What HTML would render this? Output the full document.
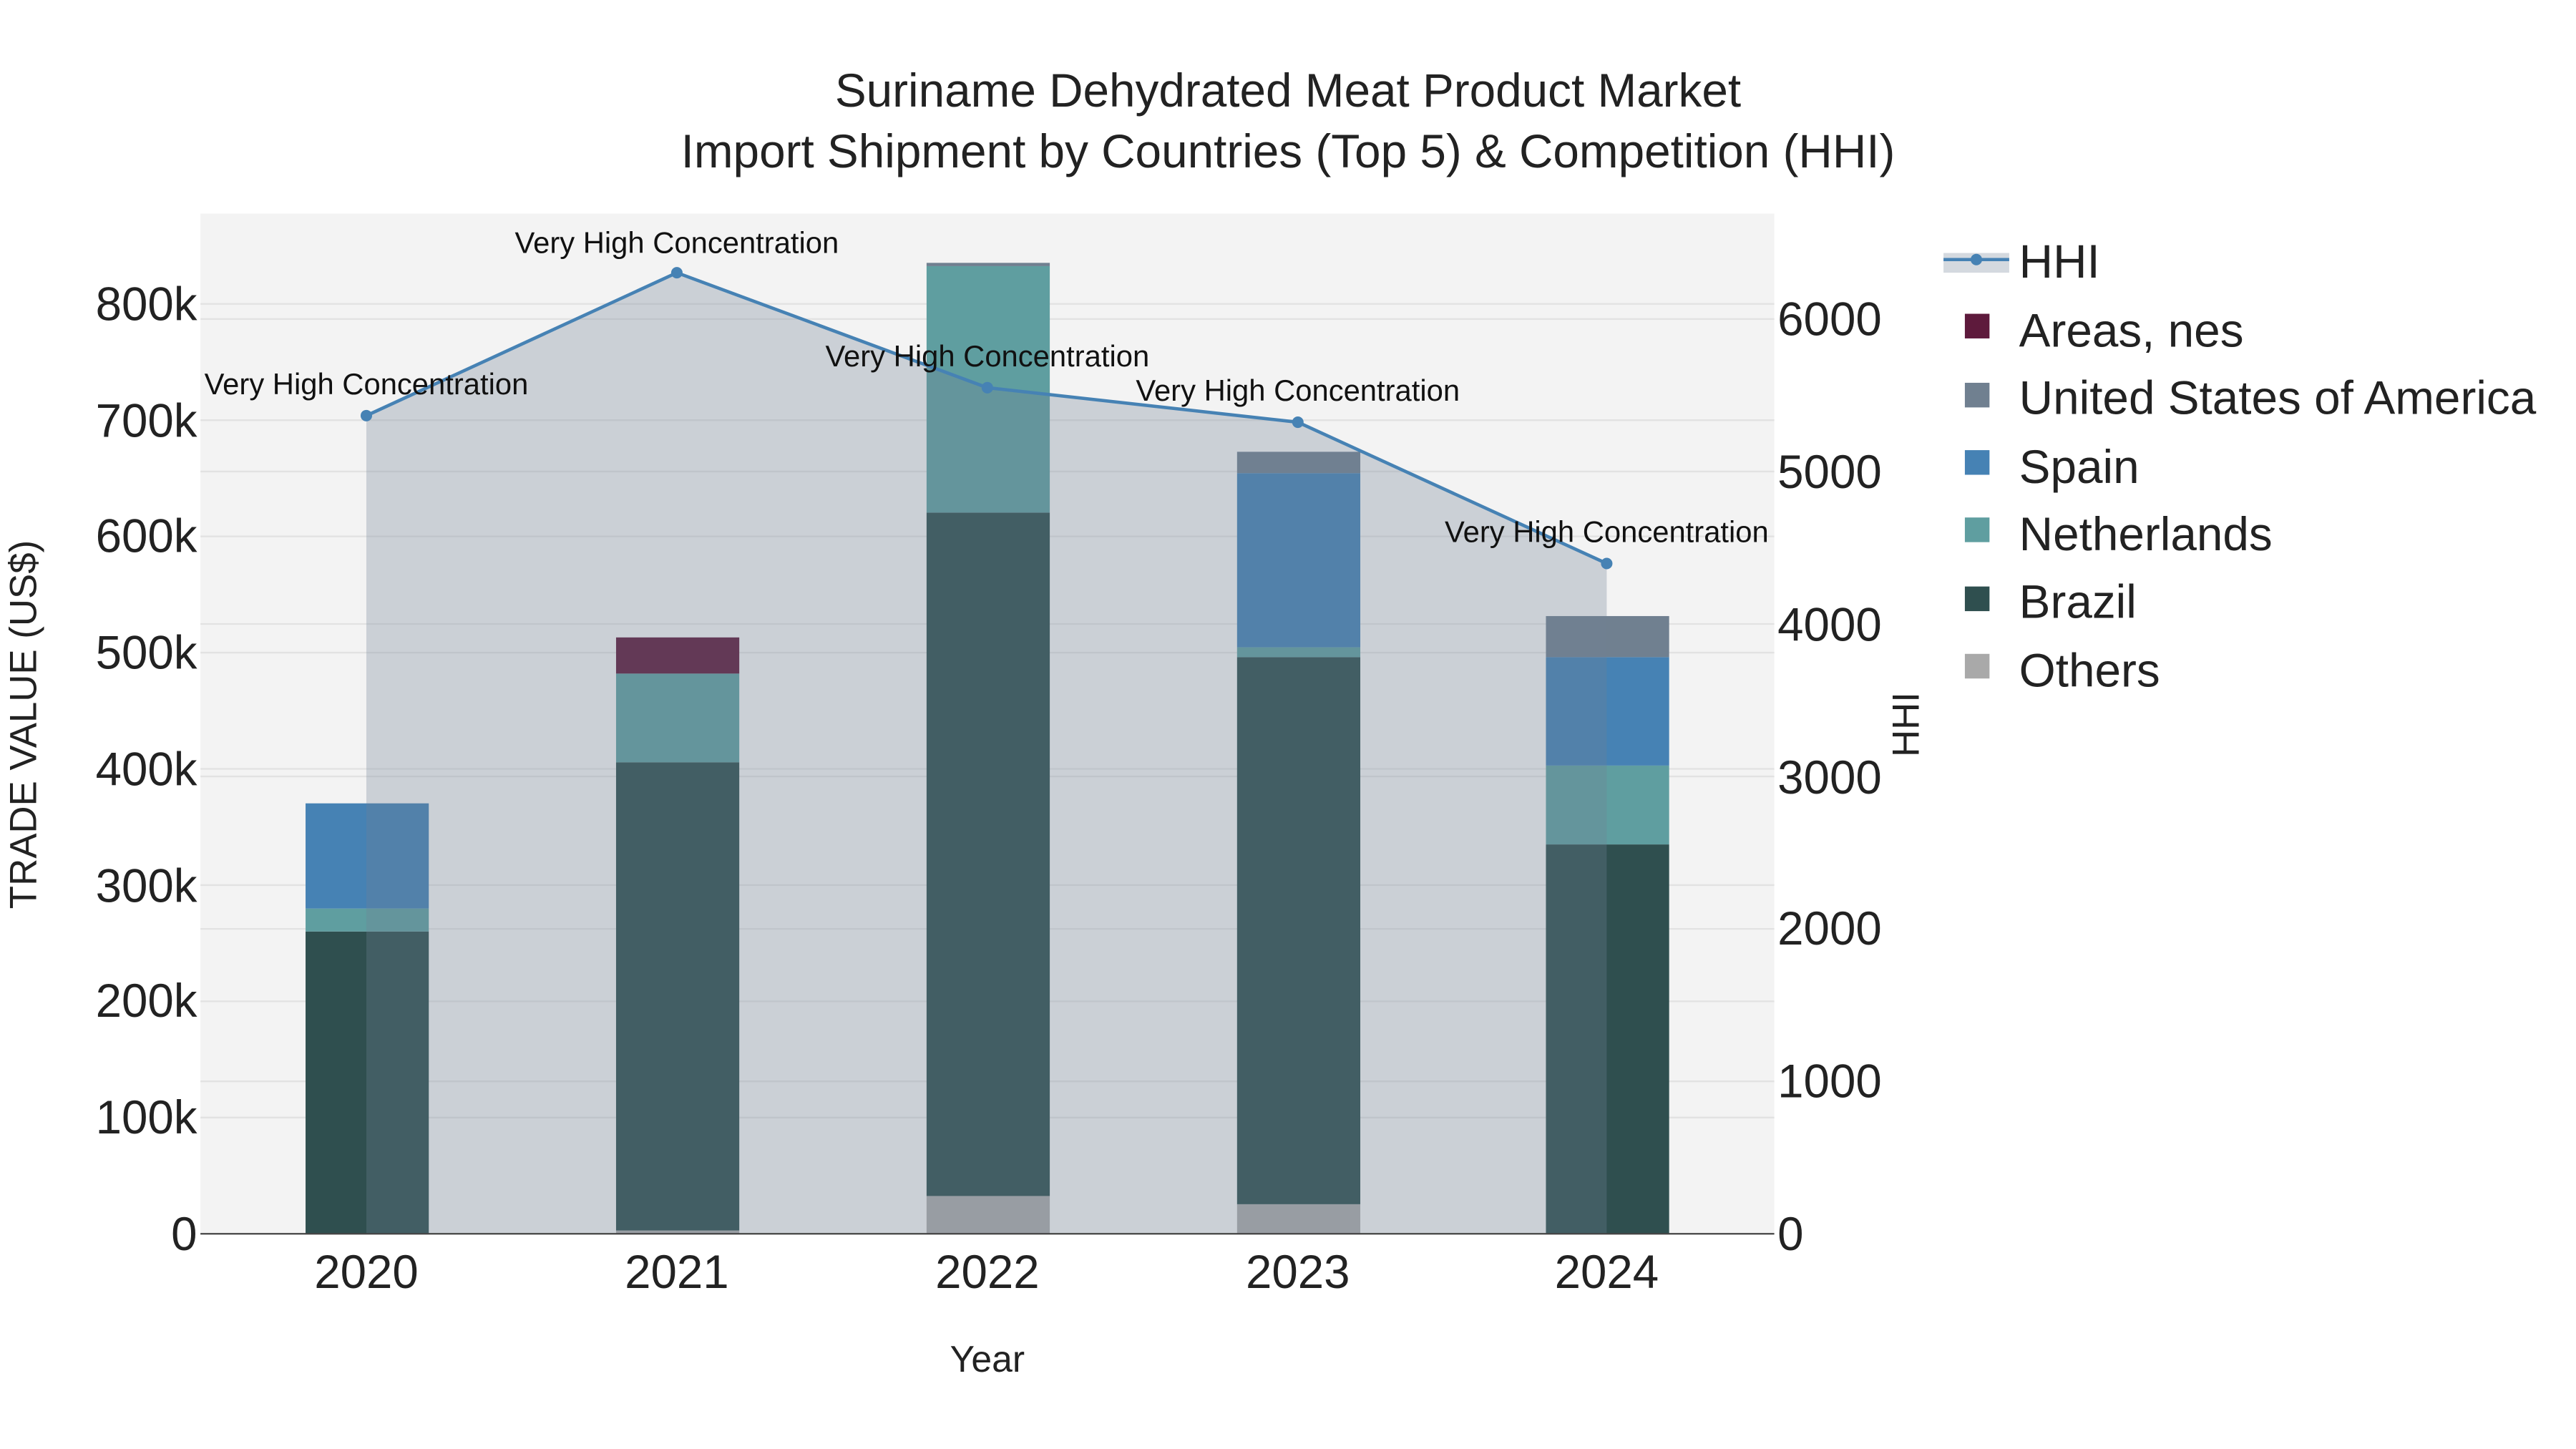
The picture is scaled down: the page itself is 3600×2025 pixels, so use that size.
<!DOCTYPE html>
<html><head><meta charset="utf-8"><style>html,body{margin:0;padding:0;background:#fff}svg{display:block}</style></head>
<body>
<svg width="3600" height="2025" viewBox="0 0 1568 882" preserveAspectRatio="none" xmlns="http://www.w3.org/2000/svg" font-family="Liberation Sans, Arial, sans-serif">
<rect x="0" y="0" width="1568" height="882" fill="#fff"/>
<rect x="122" y="130" width="958" height="621" fill="#f3f3f3"/>
<g stroke="#e2e2e2" stroke-width="1">
<line x1="122" x2="1080" y1="680.25" y2="680.25"/><line x1="122" x2="1080" y1="609.5" y2="609.5"/>
<line x1="122" x2="1080" y1="538.75" y2="538.75"/><line x1="122" x2="1080" y1="468" y2="468"/>
<line x1="122" x2="1080" y1="397.25" y2="397.25"/><line x1="122" x2="1080" y1="326.5" y2="326.5"/>
<line x1="122" x2="1080" y1="255.75" y2="255.75"/><line x1="122" x2="1080" y1="185" y2="185"/>
<line x1="122" x2="1080" y1="658.2" y2="658.2"/><line x1="122" x2="1080" y1="565.4" y2="565.4"/>
<line x1="122" x2="1080" y1="472.6" y2="472.6"/><line x1="122" x2="1080" y1="379.8" y2="379.8"/>
<line x1="122" x2="1080" y1="287" y2="287"/><line x1="122" x2="1080" y1="194.2" y2="194.2"/>
</g>
<g>
<rect x="186" y="567" width="75" height="184" fill="#2f4f4f"/>
<rect x="186" y="553" width="75" height="14" fill="#5f9ea0"/>
<rect x="186" y="489" width="75" height="64" fill="#4682b4"/>

<rect x="375" y="749" width="75" height="2" fill="#a9a9a9"/>
<rect x="375" y="464" width="75" height="285" fill="#2f4f4f"/>
<rect x="375" y="410" width="75" height="54" fill="#5f9ea0"/>
<rect x="375" y="388" width="75" height="22" fill="#5e1a3c"/>

<rect x="564" y="728" width="75" height="23" fill="#a9a9a9"/>
<rect x="564" y="312" width="75" height="416" fill="#2f4f4f"/>
<rect x="564" y="162" width="75" height="150" fill="#5f9ea0"/>
<rect x="564" y="160" width="75" height="2" fill="#708090"/>

<rect x="753" y="733" width="75" height="18" fill="#a9a9a9"/>
<rect x="753" y="400" width="75" height="333" fill="#2f4f4f"/>
<rect x="753" y="394" width="75" height="6" fill="#5f9ea0"/>
<rect x="753" y="288" width="75" height="106" fill="#4682b4"/>
<rect x="753" y="275" width="75" height="13" fill="#708090"/>

<rect x="941" y="514" width="75" height="237" fill="#2f4f4f"/>
<rect x="941" y="466" width="75" height="48" fill="#5f9ea0"/>
<rect x="941" y="400" width="75" height="66" fill="#4682b4"/>
<rect x="941" y="375" width="75" height="25" fill="#708090"/>
</g>
<polygon points="223,751 223,253 412,166 601,236 790,257 978,343 978,751" fill="rgba(112,128,150,0.3)"/>
<polyline points="223,253 412,166 601,236 790,257 978,343" fill="none" stroke="#4682b4" stroke-width="2"/>
<g fill="#4682b4"><circle cx="223" cy="253" r="3.5"/><circle cx="412" cy="166" r="3.5"/><circle cx="601" cy="236" r="3.5"/><circle cx="790" cy="257" r="3.5"/><circle cx="978" cy="343" r="3.5"/></g>
<line x1="122" x2="1080" y1="751" y2="751" stroke="#444" stroke-width="1"/>
<g font-size="18.2" fill="#111" text-anchor="middle">
<text x="223" y="240">Very High Concentration</text>
<text x="412" y="154">Very High Concentration</text>
<text x="601" y="223">Very High Concentration</text>
<text x="790" y="244">Very High Concentration</text>
<text x="978" y="330">Very High Concentration</text>
</g>
<g font-size="28.5" fill="#222" text-anchor="end">
<text x="120" y="761">0</text><text x="120" y="690">100k</text><text x="120" y="619">200k</text>
<text x="120" y="549">300k</text><text x="120" y="478">400k</text><text x="120" y="407">500k</text>
<text x="120" y="336">600k</text><text x="120" y="266">700k</text><text x="120" y="195">800k</text>
</g>
<g font-size="28.5" fill="#222" text-anchor="start">
<text x="1082" y="761">0</text><text x="1082" y="668">1000</text><text x="1082" y="575">2000</text>
<text x="1082" y="483">3000</text><text x="1082" y="390">4000</text><text x="1082" y="297">5000</text>
<text x="1082" y="204">6000</text>
</g>
<g font-size="28.5" fill="#222" text-anchor="middle">
<text x="223" y="784">2020</text><text x="412" y="784">2021</text><text x="601" y="784">2022</text>
<text x="790" y="784">2023</text><text x="978" y="784">2024</text>
</g>
<text x="601" y="835" font-size="22.5" fill="#222" text-anchor="middle">Year</text>
<text transform="translate(22,441) rotate(-90)" font-size="23" fill="#222" text-anchor="middle">TRADE VALUE (US$)</text>
<text transform="translate(1168,441) rotate(-90)" font-size="23" fill="#222" text-anchor="middle">HHI</text>
<g font-size="28.6" fill="#222" text-anchor="middle">
<text x="784" y="65">Suriname Dehydrated Meat Product Market</text>
<text x="784" y="102">Import Shipment by Countries (Top 5) &amp; Competition (HHI)</text>
</g>
<rect x="1183" y="154" width="40" height="12" fill="rgba(112,128,150,0.3)"/>
<line x1="1183" x2="1223" y1="158" y2="158" stroke="#4682b4" stroke-width="2"/>
<circle cx="1203" cy="158" r="3.5" fill="#4682b4"/>
<rect x="1196" y="191" width="15" height="15" fill="#5e1a3c"/>
<rect x="1196" y="233" width="15" height="15" fill="#708090"/>
<rect x="1196" y="274" width="15" height="15" fill="#4682b4"/>
<rect x="1196" y="315" width="15" height="15" fill="#5f9ea0"/>
<rect x="1196" y="357" width="15" height="15" fill="#2f4f4f"/>
<rect x="1196" y="398" width="15" height="15" fill="#a9a9a9"/>
<g font-size="28.6" fill="#222">
<text x="1229" y="169">HHI</text><text x="1229" y="211">Areas, nes</text>
<text x="1229" y="252">United States of America</text><text x="1229" y="294">Spain</text>
<text x="1229" y="335">Netherlands</text><text x="1229" y="376">Brazil</text><text x="1229" y="418">Others</text>
</g>
</svg>
</body></html>
